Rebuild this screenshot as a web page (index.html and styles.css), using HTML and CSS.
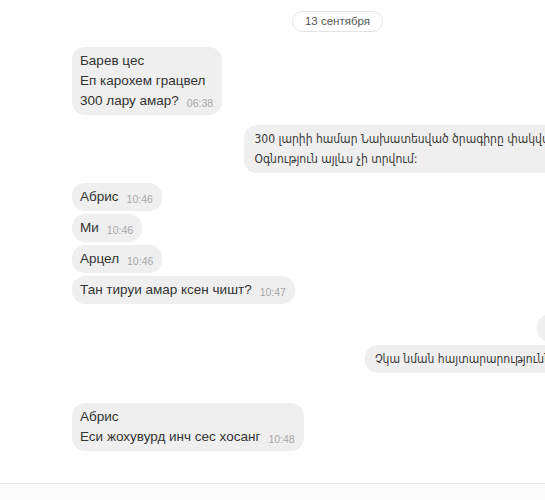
FILE: index.html
```html
<!DOCTYPE html>
<html lang="ru">
<head>
<meta charset="utf-8">
<title>Chat</title>
<link rel="stylesheet" href="styles.css">
</head>
<body>
<div class="page">
  <div class="chat">
    <div class="date-row"><span class="date-pill">13 сентября</span></div>

    <div class="row in">
      <div class="bubble">Барев цес<br>Еп карохем грацвел<br>300 лару амар?<span class="time">06:38</span></div>
    </div>

    <div class="row out gap-top">
      <div class="bubble hy">300 լարիի համար Նախատեսված ծրագիրը փակված է այժմ<br>Օգնություն այլևս չի տրվում:</div>
    </div>

    <div class="row in gap-top">
      <div class="bubble">Абрис<span class="time">10:46</span></div>
    </div>
    <div class="row in">
      <div class="bubble">Ми<span class="time">10:46</span></div>
    </div>
    <div class="row in">
      <div class="bubble">Арцел<span class="time">10:46</span></div>
    </div>
    <div class="row in">
      <div class="bubble">Тан тируи амар ксен чишт?<span class="time">10:47</span></div>
    </div>

    <div class="row out gap-top">
      <div class="bubble hy">Այո<span class="time">10:47</span></div>
    </div>
    <div class="row out">
      <div class="bubble hy">Չկա նման հայտարարություններ<span class="time">10:47</span></div>
    </div>

    <div class="row in gap-big">
      <div class="bubble">Абрис<br>Еси жохувурд инч сес хосанг<span class="time">10:48</span></div>
    </div>
  </div>
  <div class="composer"></div>
</div>
</body>
</html>
```

FILE: styles.css
```css
html, body {
  margin: 0;
  padding: 0;
  background: #ffffff;
  overflow: hidden;
}

body {
  font-family: "Liberation Sans", "DejaVu Sans", Arial, sans-serif;
  font-size: 13.5px;
  color: #333333;
}

.page {
  width: 545px;
  height: 500px;
  display: flex;
  flex-direction: column;
  overflow: hidden;
}

.chat {
  width: 608px;
  flex: 1;
  padding: 11px 0 0 72px;
  box-sizing: border-box;
  display: flex;
  flex-direction: column;
  gap: 3px;
}

.date-row {
  width: 531px;
  display: flex;
  justify-content: center;
  margin-bottom: 12px;
}

.date-pill {
  display: inline-block;
  height: 21px;
  line-height: 19px;
  box-sizing: border-box;
  padding: 0 12px;
  border: 1px solid #e4e4e4;
  border-radius: 11px;
  font-size: 11.5px;
  color: #555555;
  background: #ffffff;
}

.row {
  display: flex;
}

.row.in { justify-content: flex-start; }
.row.out { justify-content: flex-end; }

.gap-top { margin-top: 7px; }
.gap-big { margin-top: 27px; }

.bubble {
  background: #efefef;
  border-radius: 13px;
  padding: 4px 9px 4px 8px;
  line-height: 20px;
  white-space: nowrap;
}

.bubble.hy {
  font-family: "DejaVu Sans Condensed", "DejaVu Sans", sans-serif;
  font-size: 12px;
  padding-left: 10px;
  color: #3a3a3a;
}

.time {
  font-family: "Liberation Sans", Arial, sans-serif;
  font-size: 10.5px;
  line-height: 1;
  color: #a8a8a8;
  margin-left: 8px;
  position: relative;
  top: 2px;
}

.composer {
  height: 16px;
  border-top: 1px solid #e6e6e6;
  background: #fcfcfc;
  flex: none;
}
```
